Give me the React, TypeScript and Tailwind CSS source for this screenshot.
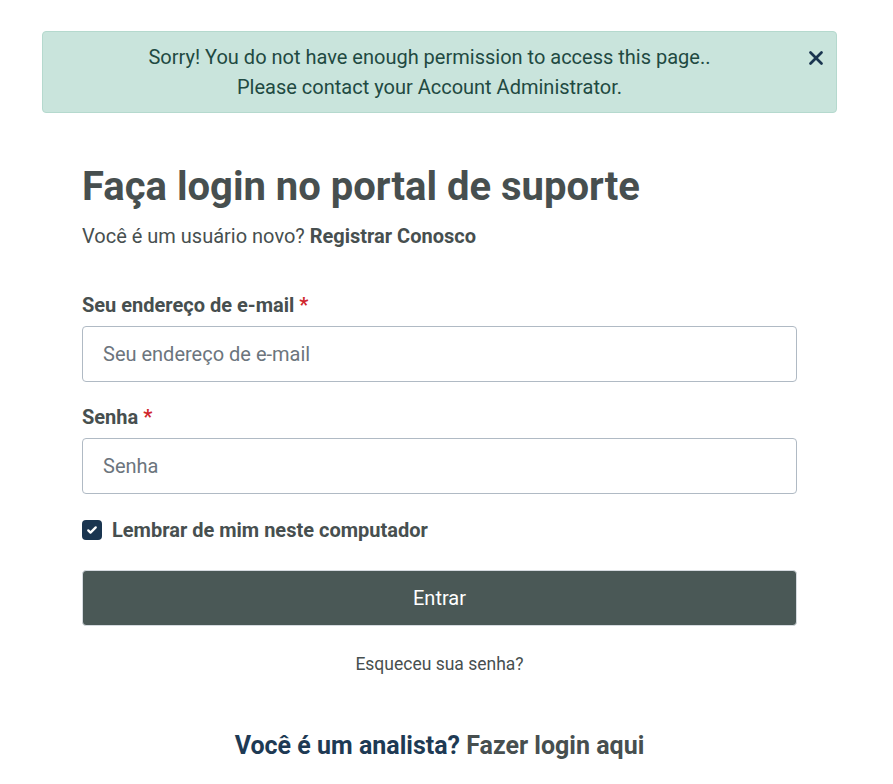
import { X } from "lucide-react";

export default function App() {
  return (
    <div className="min-h-screen bg-white font-['Roboto',sans-serif] text-[#474f4f]">
      <div className="w-[879px] px-[42px] pt-[31px] pb-6">
        <div className="relative rounded border border-[#b5d9ce] bg-[#c9e4dc] py-[10px] pl-12 pr-[68px] text-center text-[20px] leading-[30px] text-[#1f4a42]">
          <p>Sorry! You do not have enough permission to access this page..</p>
          <p>Please contact your Account Administrator.</p>
          <button type="button" className="absolute right-[9px] top-[15px] text-[#1a3550]">
            <X size={22} strokeWidth={3} />
          </button>
        </div>

        <div className="px-10 pt-[52px]">
          <h1 className="text-[40px] font-bold leading-[44px]">Faça login no portal de suporte</h1>
          <p className="mt-[15px] text-[20px] leading-6">
            Você é um usuário novo? <a className="font-bold">Registrar Conosco</a>
          </p>

          <form className="mt-[45px]">
            <label className="block text-[20px] font-bold leading-6">
              Seu endereço de e-mail <span className="text-[#d0262c]">*</span>
            </label>
            <input
              className="mt-[9px] block h-[56px] w-full rounded border border-[#b0bac4] px-5 text-[20px] text-[#474f4f] placeholder:text-[#6c757d] outline-none"
              placeholder="Seu endereço de e-mail"
            />

            <label className="mt-[23px] block text-[20px] font-bold leading-6">
              Senha <span className="text-[#d0262c]">*</span>
            </label>
            <input
              type="password"
              className="mt-[9px] block h-[56px] w-full rounded border border-[#b0bac4] px-5 text-[20px] text-[#474f4f] placeholder:text-[#6c757d] outline-none"
              placeholder="Senha"
            />

            <label className="mt-[24px] flex items-center gap-[10px] text-[20px] font-bold leading-6">
              <span className="flex h-5 w-5 items-center justify-center rounded-[4px] bg-[#1a3550]">
                <svg viewBox="0 0 16 16" className="h-3 w-3" fill="none" stroke="white" strokeWidth={3} strokeLinecap="round" strokeLinejoin="round">
                  <path d="M3 8.5l3 3 7-7" />
                </svg>
              </span>
              Lembrar de mim neste computador
            </label>

            <button
              type="button"
              className="mt-[28px] block h-[56px] w-full rounded border border-[#d5dadf] bg-[#4a5856] text-[20px] text-white"
            >
              Entrar
            </button>

            <p className="mt-[26px] text-center text-[17.5px] leading-6">
              <a>Esqueceu sua senha?</a>
            </p>
          </form>

          <p className="mt-[56px] text-center text-[25px] font-bold leading-7">
            <span className="text-[#1e3a54]">Você é um analista?</span> <a>Fazer login aqui</a>
          </p>
        </div>
      </div>
    </div>
  );
}
